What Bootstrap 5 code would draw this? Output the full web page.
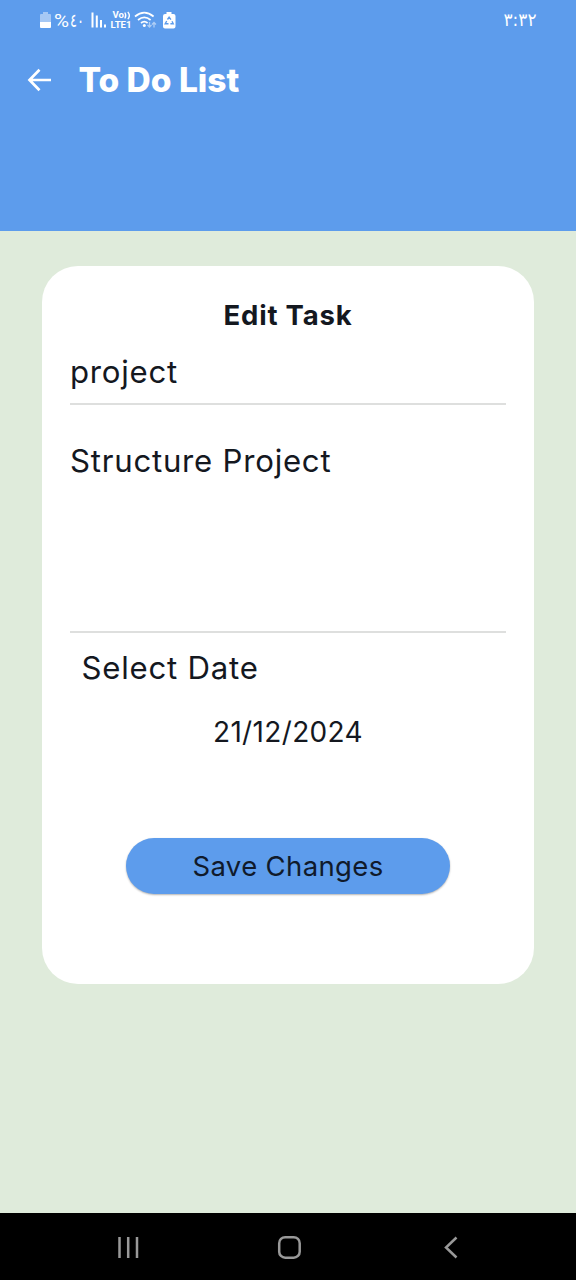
<!DOCTYPE html>
<html lang="en">
<head>
<meta charset="utf-8">
<meta name="viewport" content="width=device-width, initial-scale=1">
<title>To Do List</title>
<link href="https://cdn.jsdelivr.net/npm/bootstrap@5.3.0/dist/css/bootstrap.min.css" rel="stylesheet">
<style>
  body { font-family: Inter, "Liberation Sans", sans-serif; background: #dfebdb; color: #14181f; min-height: 1280px; letter-spacing: .75px; }
  .app-header { background: #5d9cec; height: 231px; }
  .status-strip { height: 40px; }
  .title-row { height: 80px; padding-left: 26px; gap: 25.500px; }
  .app-title { font-size: 33.5px; font-weight: 800; letter-spacing: 0; line-height: 40px; }
  .task-card { width: 492px; height: 718px; margin-top: 35px; border-radius: 36px; padding: 28px 28px 0; }
  .card-heading { font-size: 27.5px; font-weight: 700; letter-spacing: .8px; line-height: 42px; margin-bottom: 1px; }
  .task-field { border: 0; border-bottom: 2px solid #dedfde; border-radius: 0; padding: 0; font-size: 31.2px; line-height: 38px; color: inherit; letter-spacing: inherit; background: transparent; resize: none; }
  .task-name { height: 56px; margin-top: 12px; padding-top: 2px; padding-bottom: 10px; }
  .task-details { height: 191px; margin-top: 37px; }
  .date-label { font-size: 31.2px; line-height: 38px; padding-left: 11.5px; margin-top: 16px; }
  .date-value { font-size: 28px; line-height: 36px; margin-top: 27px; letter-spacing: .35px; }
  .save-btn, .save-btn:hover { width: 324px; height: 56px; margin-top: 88px; background: #5d9cec; color: #101a2b; font-size: 27.5px; letter-spacing: .35px; font-weight: 400; box-shadow: 0 1px 2px rgba(0,0,0,.3); padding: 2px 0 0; }
  .phone-nav { height: 67px; background: #000; }
</style>
</head>
<body class="d-flex flex-column">
  <header class="app-header text-white">
    <div class="status-strip">
      <svg class="d-block" width="576" height="40" fill="#fff" font-family="'DejaVu Sans', sans-serif" letter-spacing="0" aria-label="Status bar">
        <path d="M43 12h5v2h2q1 0 1 1v7H40v-7q0-1 1-1h2z" opacity=".45"/><path d="M40 22h11v5q0 1-1 1h-9q-1 0-1-1z"/>
        <text x="54" y="27" font-family="Roboto" font-size="18" textLength="15" lengthAdjust="spacingAndGlyphs">%</text>
        <text x="70" y="26.500" font-size="19" textLength="14" lengthAdjust="spacingAndGlyphs" direction="ltr">٤٠</text>
        <path d="M91.500 12.500h2v15h-2zM95.800 15.500h2v12h-2zM100 20h2v7.500h-2zM104 24.500h2v3h-2z"/>
        <g font-family="Roboto" font-weight="700"><text x="112.500" y="17.700" font-size="8.500" textLength="11.500" lengthAdjust="spacingAndGlyphs">Vo</text><text x="110.500" y="28" font-size="9" textLength="21" lengthAdjust="spacingAndGlyphs">LTE1</text></g>
        <path d="M124.800 12.500q2 3 0 6M127.800 11.800q3 3.700 0 7.400" fill="none" stroke="#fff" stroke-width="1.300"/>
        <path d="M135 16.500q9.300-7.800 18.600 0M138 20q6.300-5.200 12.600 0M141 23q3.300-2.600 6.600 0" fill="none" stroke="#fff" stroke-width="1.700"/>
        <circle cx="144.300" cy="25.500" r="1.500"/>
        <path d="M149.500 22v5m-2-2 2 2 2-2M154 27.500v-5m-2 2 2-2 2 2" fill="none" stroke="#fff" stroke-opacity=".5" stroke-width="1.300"/>
        <path d="M166.500 12h5v2h2q2 0 2 2v10.500q0 2-2 2h-8.500q-2 0-2-2V16q0-2 2-2h1.500z"/>
        <path d="M167.500 19.500l1.600-2.300 1.800 2.500M172 21.300l1.200 2.400h-2.800M168.500 23.700h-3.300l1.500-2.700" fill="none" stroke="#5d9cec" stroke-width="1.400"/>
        <text x="503.500" y="26" font-size="18" textLength="33" lengthAdjust="spacingAndGlyphs" direction="ltr">٣:٣٢</text>
      </svg>
    </div>
    <div class="title-row d-flex align-items-center">
      <svg width="27" height="28" viewBox="0 0 27 28" fill="none" stroke="#fff" stroke-width="2.700" aria-label="Back"><path d="M25 14H4M13.500 3.700 3.500 14l10 10.300"/></svg>
      <h1 class="app-title mb-0">To Do List</h1>
    </div>
  </header>
  <main class="flex-grow-1">
    <section class="task-card bg-white mx-auto d-flex flex-column">
      <h2 class="card-heading text-center">Edit Task</h2>
      <input class="task-field task-name w-100" value="project" aria-label="Task name">
      <textarea class="task-field task-details w-100" aria-label="Task details">Structure Project</textarea>
      <div class="date-label">Select Date</div>
      <div class="date-value text-center">21/12/2024</div>
      <button class="save-btn btn border-0 rounded-pill align-self-center" type="button">Save Changes</button>
    </section>
  </main>
  <nav class="phone-nav">
    <svg class="d-block" width="576" height="67" fill="none" stroke="#999" stroke-width="2.500" aria-label="System navigation">
      <path d="M119.500 24v21M128.200 24v21M137 24v21"/><rect x="279.200" y="24.200" width="20.500" height="20.500" rx="6"/><path d="m456.500 24.500-10.500 10 10.500 10"/>
    </svg>
  </nav>
  <script src="https://cdn.jsdelivr.net/npm/bootstrap@5.3.0/dist/js/bootstrap.bundle.min.js"></script>
</body>
</html>
